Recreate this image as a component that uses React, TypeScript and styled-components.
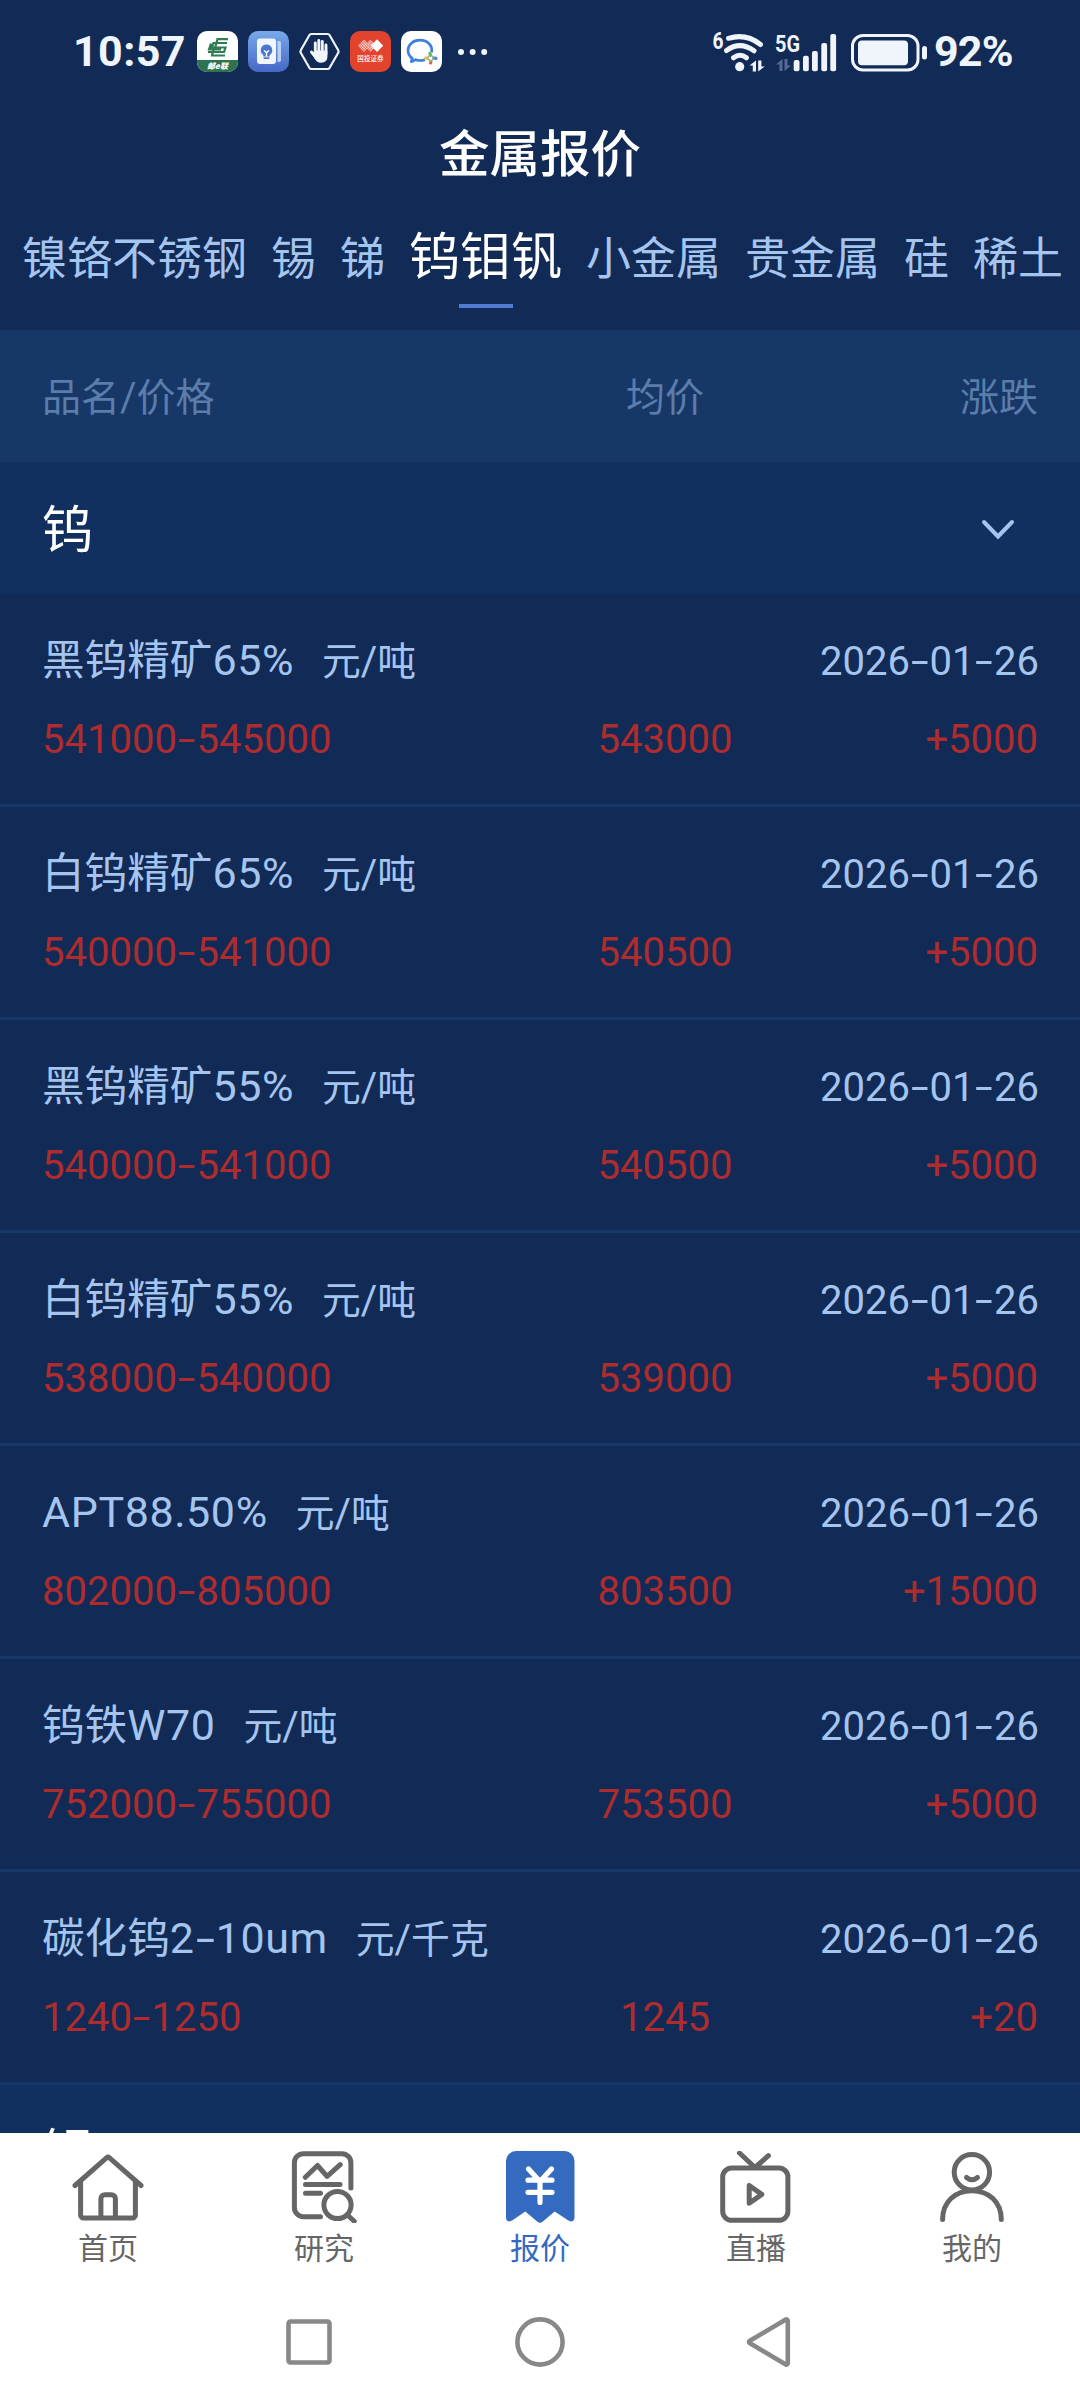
import React from "react";
import styled, { createGlobalStyle } from "styled-components";

const GlobalStyle = createGlobalStyle`
  * { box-sizing: border-box; }
  html, body { margin: 0; padding: 0; background: #112b56; }
`;

const latin = `Roboto, "Noto Sans CJK SC", sans-serif`;
const cjk = `"Noto Sans CJK SC", Roboto, sans-serif`;

const Screen = styled.div`
  width: 1080px;
  height: 2400px;
  display: flex;
  flex-direction: column;
  overflow: hidden;
  background: #112b56;
  font-family: ${cjk};
  color: #a5c4ee;
`;

const StatusBar = styled.header`
  height: 103px;
  flex: none;
  display: flex;
  justify-content: space-between;
  padding: 0 68px 0 73px;
  color: #f0f4fb;
`;

const StatusGroup = styled.div`
  display: flex;
  align-items: center;
  height: 103px;
`;

const StatusText = styled.span<{ $width: number }>`
  width: ${(p) => p.$width}px;
  font: 700 43px/50px ${latin};
  padding-bottom: 2px;
  letter-spacing: ${(p) => (p.$width > 100 ? "0.4px" : "-0.8px")};
  white-space: nowrap;
`;

const AppIcons = styled.div`
  display: flex;
  gap: 10px;
  margin-left: 11px;
`;

const Title = styled.h1`
  margin: 0;
  height: 100px;
  flex: none;
  text-align: center;
  font-size: 50.5px;
  font-weight: 500;
  line-height: 95px;
  color: #fff;
`;

const Tabs = styled.nav`
  height: 127px;
  flex: none;
  display: flex;
  gap: 24px;
  padding-left: 22px;
  align-items: flex-start;
`;

const Tab = styled.div<{ $active?: boolean }>`
  display: flex;
  flex-direction: column;
  align-items: center;
  font-size: ${(p) => (p.$active ? 51 : 45)}px;
  line-height: ${(p) => (p.$active ? 101 : 106)}px;
  height: 106px;
  color: ${(p) => (p.$active ? "#fff" : "#a5c4ee")};
  white-space: nowrap;
`;

const TabMark = styled.i`
  width: 54px;
  height: 4px;
  flex: none;
  background: #4f7bd2;
`;

const Columns = styled.div`
  display: grid;
  grid-template-columns: 473px 300px 223px;
  padding: 0 42px;
`;

const TableHead = styled(Columns)`
  height: 132px;
  flex: none;
  background: #173766;
  color: #5a7dab;
  font-size: 39px;
  line-height: 128px;
`;

const Cell = styled.span<{ $align?: string }>`
  text-align: ${(p) => p.$align || "left"};
  white-space: nowrap;
`;

const List = styled.main`
  height: 1671px;
  flex: none;
  overflow: hidden;
`;

const Group = styled.section`
  height: 132px;
  display: flex;
  align-items: flex-start;
  justify-content: space-between;
  padding: 0 63px 0 42px;
  background: #12305f;
  color: #fff;
  font-size: 51px;
  line-height: 128px;
`;

const Item = styled.article`
  height: 213px;
  border-bottom: 3px solid #173766;
  display: flex;
  flex-direction: column;
  padding-top: 27px;
`;

const ItemTop = styled.div`
  height: 80px;
  display: flex;
  justify-content: space-between;
  align-items: baseline;
  padding: 0 41px 0 42px;
  line-height: 72px;
`;

const Name = styled.span`
  font-size: 42.6px;
  white-space: nowrap;
`;

const NameLatin = styled.span`
  font-family: ${latin};
  font-size: 43px;
  letter-spacing: 0.6px;
`;

const Unit = styled.span`
  margin-left: 28px;
  font-size: 38.8px;
`;

const Slash = styled.span`
  font-family: ${latin};
  font-size: 40px;
`;

const Digits = styled.span`
  font-family: ${latin};
  font-size: 40px;
  white-space: nowrap;
`;

const Hyphen = styled.span`
  display: inline-block;
  width: 0.49em;
  text-align: center;
  letter-spacing: 0;
  transform: scaleX(1.6);
`;

const Prices = styled(Columns)`
  height: 78px;
  line-height: 78px;
  align-items: baseline;
  color: #ae2c2e;
`;

const BottomBar = styled.footer`
  height: 137px;
  flex: none;
  display: grid;
  grid-template-columns: repeat(5, 1fr);
  background: #fff;
`;

const BottomItem = styled.div<{ $active?: boolean }>`
  display: flex;
  flex-direction: column;
  align-items: center;
  padding-top: 18px;
  color: ${(p) => (p.$active ? "#346abf" : "#666")};
  font-size: 30px;
  line-height: 46px;
`;

const SystemNav = styled.div`
  flex: 1;
  display: flex;
  justify-content: center;
  gap: 177px;
  padding-top: 44px;
  background: #fff;
`;

function withHyphens(text: string) {
  return text.split("-").map((part, i) => (
    <React.Fragment key={i}>
      {i > 0 && <Hyphen>-</Hyphen>}
      {part}
    </React.Fragment>
  ));
}

function ItemName({ text }: { text: string }) {
  const runs = text.match(/[\x20-\x7e]+|[^\x20-\x7e]+/g) || [];
  return (
    <Name>
      {runs.map((run, i) =>
        /[\x20-\x7e]/.test(run) ? <NameLatin key={i}>{withHyphens(run)}</NameLatin> : run
      )}
    </Name>
  );
}

const tabs = ["镍铬不锈钢", "锡", "锑", "钨钼钒", "小金属", "贵金属", "硅", "稀土"];

const items = [
  { name: "黑钨精矿65%", unit: "吨", range: "541000-545000", avg: "543000", change: "+5000" },
  { name: "白钨精矿65%", unit: "吨", range: "540000-541000", avg: "540500", change: "+5000" },
  { name: "黑钨精矿55%", unit: "吨", range: "540000-541000", avg: "540500", change: "+5000" },
  { name: "白钨精矿55%", unit: "吨", range: "538000-540000", avg: "539000", change: "+5000" },
  { name: "APT88.50%", unit: "吨", range: "802000-805000", avg: "803500", change: "+15000" },
  { name: "钨铁W70", unit: "吨", range: "752000-755000", avg: "753500", change: "+5000" },
  { name: "碳化钨2-10um", unit: "千克", range: "1240-1250", avg: "1245", change: "+20" },
];

const Line = styled.svg`
  flex: none;
  display: block;
  fill: none;
  stroke: currentColor;
  stroke-width: 5;
  stroke-linecap: round;
  stroke-linejoin: round;
`;

const Chevron = styled(Line)`
  margin-top: 54px;
  color: #a5c4ee;
  stroke-width: 4;
  stroke-linejoin: miter;
`;

const Glyph = styled.svg`
  flex: none;
  display: block;
  overflow: visible;
`;

const PostIcon = () => (
  <Glyph width="41" height="41" viewBox="0 0 41 41">
    <clipPath id="post"><rect width="41" height="41" rx="10" /></clipPath>
    <g clipPath="url(#post)">
      <rect width="41" height="41" fill="#fff" />
      <rect y="29" width="41" height="12" fill="#2e7350" />
      <g stroke="#2e7d55" strokeWidth="2.2" fill="none">
        <path d="M31 8.2H20.5L17.5 19M30 12H16.5L14.8 16.5H28.5L27 21H11M14 12.5L12 18.5H24M28 24.5H15L17 17" />
      </g>
      <text x="20.5" y="38" textAnchor="middle" fill="#fff" fontFamily="Noto Sans CJK SC" fontSize="8" fontWeight="900" fontStyle="italic">邮e联</text>
    </g>
  </Glyph>
);

const TipsIcon = () => (
  <Glyph width="41" height="41" viewBox="0 0 41 41">
    <linearGradient id="tips" x1="0" y1="0" x2="0" y2="1">
      <stop offset="0" stopColor="#78a9ea" />
      <stop offset="1" stopColor="#4568c6" />
    </linearGradient>
    <rect width="41" height="41" rx="10" fill="url(#tips)" />
    <rect x="9" y="7.5" width="19" height="25.5" rx="3" fill="#f1f5fd" />
    <path d="M29.5 10h1.5a2 2 0 0 1 2 2v17a2 2 0 0 1-2 2h-1.5z" fill="#bdd0f4" />
    <path d="M18.5 13.5a5.8 5.8 0 0 1 3.2 10.6v1.4h-6.4v-1.4a5.8 5.8 0 0 1 3.2-10.6z" fill="#4b78cf" />
    <path d="M16 19.5l2.5 2 2.5-2M18.5 21.5v4" stroke="#fff" strokeWidth="1.4" fill="none" />
    <rect x="15.5" y="26.3" width="6" height="1.7" rx=".8" fill="#4b78cf" />
  </Glyph>
);

const HandIcon = () => (
  <Glyph width="41" height="41" viewBox="0 0 41 41">
    <path d="M12.2 3h16.6a2 2 0 0 1 1.7 1l8.6 15a3 3 0 0 1 0 3l-8.6 15a2 2 0 0 1-1.7 1H12.2a2 2 0 0 1-1.7-1L1.9 22a3 3 0 0 1 0-3l8.6-15a2 2 0 0 1 1.7-1z" fill="none" stroke="#f0f4fb" strokeWidth="2.2" />
    <g stroke="#f0f4fb" strokeWidth="2.9" strokeLinecap="round" fill="none">
      <path d="M16.3 12v10M19.8 9.5v12M23.3 10.5v11M27 14v9M12.5 21l4 5" />
    </g>
    <path d="M15 19.5h13.4v6c0 4-2.4 6.2-6.3 6.2-3.6 0-5-1.6-7.1-5z" fill="#f0f4fb" />
  </Glyph>
);

const BrokerIcon = () => (
  <Glyph width="41" height="41" viewBox="0 0 41 41">
    <pattern id="grid" width="2" height="2" patternUnits="userSpaceOnUse" patternTransform="rotate(45)">
      <rect width="1.4" height="1.4" fill="#fff" />
    </pattern>
    <rect width="41" height="41" rx="10" fill="#e2432d" />
    <path d="M14 8.5l6 6.2-6 6.2-6-6.2zM20.5 8.5l6 6.2-6 6.2-6-6.2z" fill="url(#grid)" />
    <path d="M27 8.3l6.2 6.4-6.2 6.4-6.2-6.4z" fill="#fff" />
    <text x="20.5" y="30.3" textAnchor="middle" fill="#fff" fontFamily="Noto Sans CJK SC" fontSize="6.6" fontWeight="500">国投证券</text>
  </Glyph>
);

const ChatIcon = () => (
  <Glyph width="41" height="41" viewBox="0 0 41 41">
    <rect width="41" height="41" rx="10" fill="#fff" />
    <path d="M30.5 21.5c1.7-7-4.2-12.3-11.5-12.3-7 0-12 4.5-12 10.3 0 3.5 1.8 6 4.3 7.9l-1 3.3 4.3-2c3 1 6.5 1 9.4 0" fill="none" stroke="#3c82dc" strokeWidth="2.7" strokeLinejoin="round" />
    <g strokeWidth="3.2" strokeLinecap="round">
      <path d="M28.9 22.5l.6 1.8" stroke="#5fb75a" />
      <path d="M33 27l1.9.3" stroke="#3c82dc" />
      <path d="M29.8 31l-.2 1" stroke="#e8603c" />
      <path d="M24.8 27l1.6.2" stroke="#f3b63c" />
    </g>
    <path d="M27 26l2.5-2.5M30.5 24.5l3 2.5M32 28l-2.5 3M27 27.5l2.5 2.5" stroke="#8ab07c" strokeWidth="1.4" />
  </Glyph>
);

const Dots = styled(Glyph)`
  margin-left: 15px;
`;

const Wifi = () => (
  <Glyph width="60" height="44" viewBox="711 28 60 44">
    <text x="712.5" y="47" fill="#f0f4fb" fontFamily="Roboto" fontWeight="700" fontSize="23" textLength="11" lengthAdjust="spacingAndGlyphs">6</text>
    <g fill="none" stroke="#f0f4fb" strokeWidth="5" strokeLinecap="round">
      <path d="M728.5 36.3Q746 31 760.5 42.5" />
      <path d="M726.5 48.5Q740 38.7 754 48.8" />
      <path d="M733.5 55.8Q740 50.8 746.5 55.8" />
    </g>
    <circle cx="739.7" cy="64.7" r="4.6" fill="#f0f4fb" />
    <path d="M756 58.5v11h-3.2v-6h-3.3zM758.2 69.5v-11h3.2v6h3.3z" fill="#f0f4fb" />
  </Glyph>
);

const Signal = () => (
  <Glyph width="66" height="44" viewBox="771 28 66 44">
    <text x="775" y="50" fill="#f0f4fb" fontFamily="Roboto" fontWeight="700" fontSize="24.5" textLength="25" lengthAdjust="spacingAndGlyphs">5G</text>
    <path d="M782.5 57v12h-3v-6.5h-3.5zM784.5 69v-12h3v6.5h3.5z" fill="#566b93" />
    {[[796.7, 58], [806, 53.7], [815, 49], [824.3, 41], [833.3, 32]].map(([x, y]) => (
      <rect key={x} x={x - 3} y={y} width="5.8" height={69.3 - y} rx="2" fill="#f0f4fb" />
    ))}
  </Glyph>
);

const Battery = () => (
  <Glyph width="97" height="44" viewBox="837 28 97 44">
    <rect x="852.5" y="33.5" width="65.5" height="34.5" rx="10.5" fill="none" stroke="#f0f4fb" strokeWidth="3" />
    <rect x="858" y="38.5" width="50" height="24.8" rx="4" fill="#f0f4fb" />
    <rect x="922" y="44" width="5" height="13.5" rx="2.5" fill="#f0f4fb" />
  </Glyph>
);

const HomeIcon = () => (
  <Line width="72" height="72" viewBox="0 0 72 72">
    <path d="M3 34.5L34.5 6.8a2.3 2.3 0 0 1 3 0L69 34.5M8.6 30V64a3 3 0 0 0 3 3H60.4a3 3 0 0 0 3-3V30M28.9 67V47.7a4 4 0 0 1 4-4h6.5a4 4 0 0 1 4 4V67" />
  </Line>
);

const ResearchIcon = () => (
  <Line width="72" height="72" viewBox="0 0 72 72">
    <path d="M62.9 37V11.7a9 9 0 0 0-9-9H15.4a9 9 0 0 0-9 9V56.7a9 9 0 0 0 9 9H32.5M17.3 26.3L29.5 14.5 39.1 25.3 52.2 13.7M17.5 33.4H52M17.5 42.3H32.5M60 64.5L66.3 70.3" />
    <circle cx="49.5" cy="54" r="13.6" />
  </Line>
);

const QuoteIcon = () => (
  <Line width="72" height="72" viewBox="0 0 72 72">
    <path d="M2 10a10 10 0 0 1 10-10H60.5a10 10 0 0 1 10 10V66.5c0 3.800-3.500 5-6.500 2.800L50.700 60.500 38.800 70.500a4 4 0 0 1-5.600 0L21.300 60.500 8.500 69.300C5.500 71.500 2 70.300 2 66.500z" fill="currentColor" stroke="none" />
    <path d="M24.5 18L36 30.5 47.5 18M24 29.2H48M24 41.3H48M36 30.5V51.5" stroke="#fff" strokeWidth="5.2" />
  </Line>
);

const LiveIcon = () => (
  <Line width="72" height="72" viewBox="0 0 72 72">
    <rect x="2.7" y="17" width="65.2" height="52.3" rx="9" />
    <path d="M19.5 2L35 16.5 48.4 4.7M29.2 34.5V52.3L41.8 43.4z" />
  </Line>
);

const MeIcon = () => (
  <Line width="72" height="72" viewBox="0 0 72 72">
    <circle cx="35.9" cy="21.3" r="17.7" />
    <path d="M30.5 26.5Q36 31 41.5 26.5M6.6 68.6C6.6 51 19 39.7 35.9 39.7S65.3 51 65.3 68.6" />
  </Line>
);

const bottomItems = [
  { label: "首页", Icon: HomeIcon },
  { label: "研究", Icon: ResearchIcon },
  { label: "报价", Icon: QuoteIcon, active: true },
  { label: "直播", Icon: LiveIcon },
  { label: "我的", Icon: MeIcon },
];

const SystemIcon = styled(Line)`
  color: #888;
  stroke-width: 4.6;
`;

export default function App() {
  return (
    <Screen>
      <GlobalStyle />
      <StatusBar>
        <StatusGroup>
          <StatusText $width={113}>10:57</StatusText>
          <AppIcons>
            <PostIcon />
            <TipsIcon />
            <HandIcon />
            <BrokerIcon />
            <ChatIcon />
          </AppIcons>
          <Dots width="32" height="8" viewBox="0 0 32 8" fill="#f0f4fb">
            <circle cx="4" cy="4" r="3" />
            <circle cx="15.6" cy="4" r="3" />
            <circle cx="27.2" cy="4" r="3" />
          </Dots>
        </StatusGroup>
        <StatusGroup>
          <Wifi />
          <Signal />
          <Battery />
          <StatusText $width={78}>92%</StatusText>
        </StatusGroup>
      </StatusBar>
      <Title>金属报价</Title>
      <Tabs>
        {tabs.map((t) => (
          <Tab key={t} $active={t === "钨钼钒"}>
            {t}
            {t === "钨钼钒" && <TabMark />}
          </Tab>
        ))}
      </Tabs>
      <TableHead>
        <Cell>品名<Slash>/</Slash>价格</Cell>
        <Cell $align="center">均价</Cell>
        <Cell $align="right">涨跌</Cell>
      </TableHead>
      <List>
        <Group>
          钨
          <Chevron width="38" height="26" viewBox="0 0 38 26">
            <path d="M5 6L19 20.5 33 6" />
          </Chevron>
        </Group>
        {items.map((item) => (
          <Item key={item.name}>
            <ItemTop>
              <span>
                <ItemName text={item.name} />
                <Unit>元<Slash>/</Slash>{item.unit}</Unit>
              </span>
              <Digits>{withHyphens("2026-01-26")}</Digits>
            </ItemTop>
            <Prices>
              <Digits>{withHyphens(item.range)}</Digits>
              <Cell $align="center"><Digits>{item.avg}</Digits></Cell>
              <Cell $align="right"><Digits>{item.change}</Digits></Cell>
            </Prices>
          </Item>
        ))}
        <Group>钼</Group>
      </List>
      <BottomBar>
        {bottomItems.map(({ label, Icon, active }) => (
          <BottomItem key={label} $active={active}>
            <Icon />
            {label}
          </BottomItem>
        ))}
      </BottomBar>
      <SystemNav>
        <SystemIcon width="54" height="56" viewBox="0 0 54 56">
          <rect x="6.5" y="7.5" width="41" height="41" rx="2" />
        </SystemIcon>
        <SystemIcon width="54" height="56" viewBox="0 0 54 56">
          <circle cx="27" cy="28" r="22.6" />
        </SystemIcon>
        <SystemIcon width="54" height="56" viewBox="0 0 54 56">
          <path d="M41.8 5.5a1.5 1.5 0 0 1 2 1.3V49.2a1.5 1.5 0 0 1-2 1.3L5.5 29a1.5 1.5 0 0 1 0-2z" />
        </SystemIcon>
      </SystemNav>
    </Screen>
  );
}
